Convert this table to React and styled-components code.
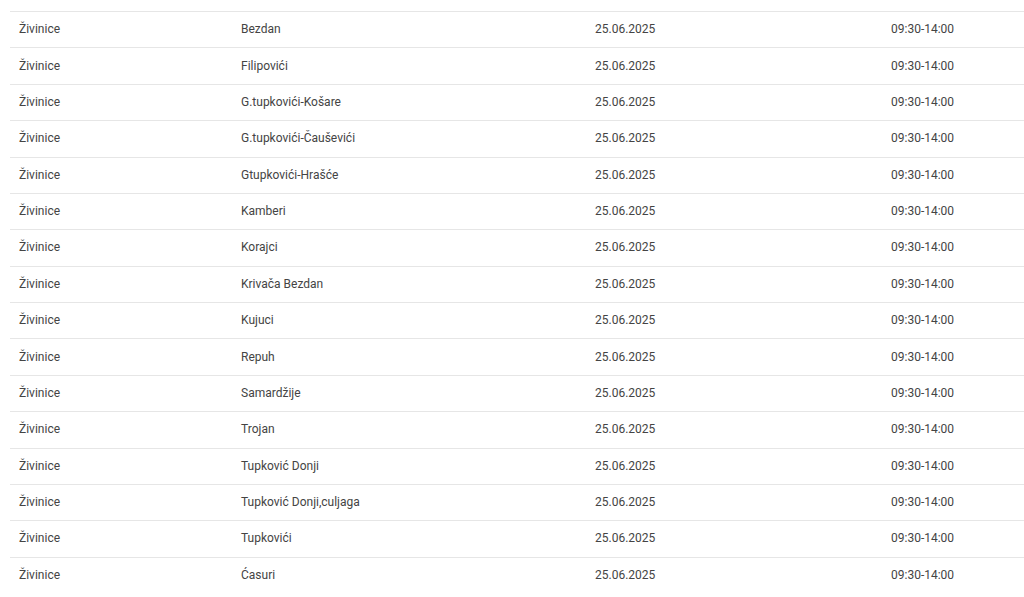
import React from 'react';
import styled, { createGlobalStyle } from 'styled-components';

const GlobalStyle = createGlobalStyle`
  html, body {
    margin: 0;
    padding: 0;
    background: #fff;
    font-family: Roboto, "Liberation Sans", Arial, sans-serif;
  }
`;

const Page = styled.div`
  padding: 11px 0 0 10px;
  overflow: hidden;
  height: 597px;
  box-sizing: border-box;
`;

const Table = styled.table`
  width: 100%;
  border-collapse: collapse;
  table-layout: fixed;
  border-top: 1px solid #f4f4f4;
`;

const Row = styled.tr`
  border-top: 1px solid #e6e6e6;
`;

const Cell = styled.td`
  padding: 9.2px 9px;
  font-size: 12px;
  line-height: 17px;
  color: #444;
  text-align: left;
  white-space: nowrap;
`;

const places = [
  'Bezdan',
  'Filipovići',
  'G.tupkovići-Košare',
  'G.tupkovići-Čauševići',
  'Gtupkovići-Hrašće',
  'Kamberi',
  'Korajci',
  'Krivača Bezdan',
  'Kujuci',
  'Repuh',
  'Samardžije',
  'Trojan',
  'Tupković Donji',
  'Tupković Donji,culjaga',
  'Tupkovići',
  'Ćasuri',
];

const App = () => {
  return (
    <Page>
      <GlobalStyle />
      <Table>
        <colgroup>
          <col style={{ width: 222 }} />
          <col style={{ width: 354 }} />
          <col style={{ width: 296 }} />
          <col />
        </colgroup>
        <tbody>
          {places.map(place => (
            <Row key={place}>
              <Cell>Živinice</Cell>
              <Cell>{place}</Cell>
              <Cell>25.06.2025</Cell>
              <Cell>09:30-14:00</Cell>
            </Row>
          ))}
        </tbody>
      </Table>
    </Page>
  );
};

export default App;
